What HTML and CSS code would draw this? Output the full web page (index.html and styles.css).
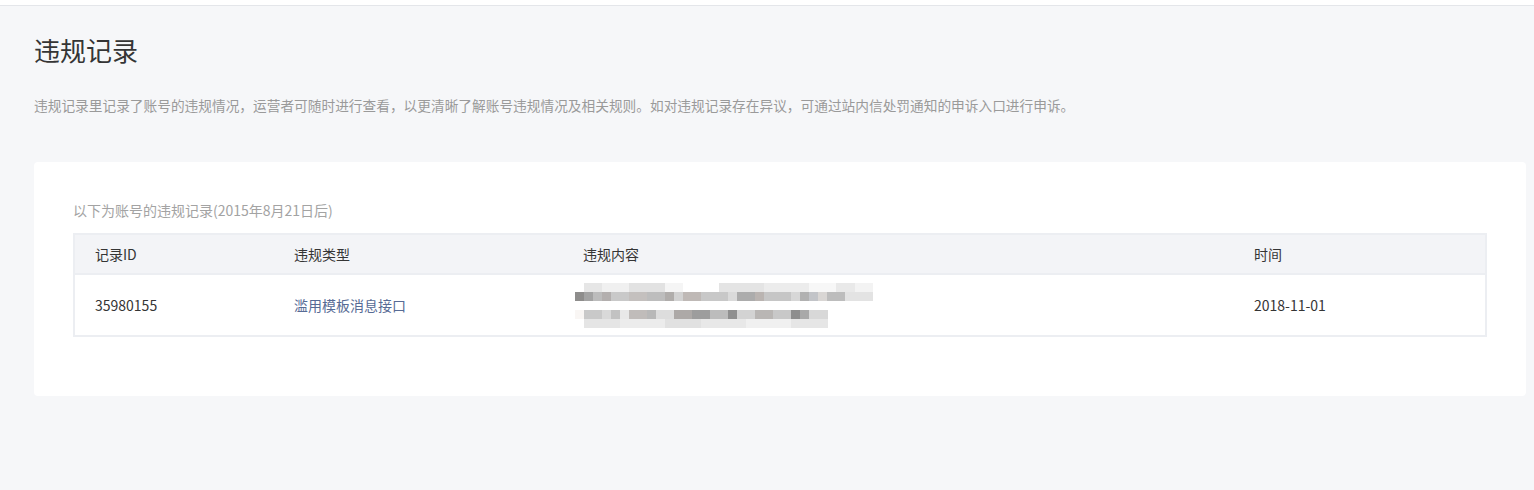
FILE: index.html
```html
<!DOCTYPE html>
<html lang="zh-CN">
<head>
    <meta charset="UTF-8">
    <meta name="viewport" content="width=device-width, initial-scale=1.0">
    <title>违规记录</title>
    <link rel="stylesheet" href="styles.css">
</head>
<body>
    <div class="topbar"></div>

    <main class="page">
        <h1 class="page-title">违规记录</h1>
        <p class="page-desc">违规记录里记录了账号的违规情况，运营者可随时进行查看，以更清晰了解账号违规情况及相关规则。如对违规记录存在异议，可通过站内信处罚通知的申诉入口进行申诉。</p>

        <section class="card">
            <p class="card-tip">以下为账号的违规记录(2015年8月21日后)</p>
            <table class="record-table">
                <thead>
                    <tr>
                        <th class="col-id">记录ID</th>
                        <th class="col-type">违规类型</th>
                        <th class="col-content">违规内容</th>
                        <th class="col-time">时间</th>
                    </tr>
                </thead>
                <tbody>
                    <tr>
                        <td>35980155</td>
                        <td><a href="#" class="type-link">滥用模板消息接口</a></td>
                        <td>
                            <!-- content is mosaic-masked in the original -->
                            <div class="masked">
                                <div class="mask-line line-1">
                                    <span class="mask-row light"></span>
                                    <span class="mask-row dark"></span>
                                </div>
                                <div class="mask-line line-2">
                                    <span class="mask-row dark"></span>
                                    <span class="mask-row light"></span>
                                </div>
                            </div>
                        </td>
                        <td>2018-11-01</td>
                    </tr>
                </tbody>
            </table>
        </section>
    </main>
</body>
</html>
```

FILE: styles.css
```css
* {
    margin: 0;
    padding: 0;
    box-sizing: border-box;
}

body {
    font-family: 'Noto Sans CJK SC', 'Noto Sans', sans-serif;
    background-color: #f6f7f9;
    color: #333;
    min-height: 490px;
}

.topbar {
    height: 6px;
    background-color: #fff;
    border-bottom: 1px solid #e4e6ea;
}

.page {
    padding: 0 8px 0 34px;
}

.page-title {
    font-size: 26px;
    font-weight: normal;
    color: #353535;
    line-height: 34px;
    padding-top: 27px;
}

.page-desc {
    font-size: 13.7px;
    color: #9a9a9a;
    line-height: 20px;
    margin-top: 28px;
}

.card {
    margin-top: 47px;
    background-color: #fff;
    border-radius: 4px;
    padding: 38px 39px 59px 39px;
}

.card-tip {
    font-size: 14px;
    color: #a3a3a3;
    line-height: 20px;
    margin-bottom: 13px;
}

.record-table {
    width: 100%;
    border-collapse: collapse;
    border: 2px solid #eceef2;
    font-size: 14px;
    color: #353535;
    text-align: left;
}

.record-table th {
    font-weight: normal;
    background-color: #f3f4f7;
    height: 40px;
    padding: 0 20px;
    border-bottom: 2px solid #eceef2;
}

.record-table td {
    height: 62px;
    padding: 0 20px;
    vertical-align: middle;
}

.col-id { width: 200px; }
.col-type { width: 289px; }
.col-content { width: 671px; }
.col-time { width: auto; }

.type-link {
    color: #576b95;
    text-decoration: none;
}

.masked {
    display: flex;
    flex-direction: column;
    gap: 9px;
    margin-left: -8px;
}

.mask-line {
    display: flex;
    flex-direction: column;
}

.mask-row {
    display: block;
    height: 9px;
}

.line-1 .mask-row { width: 298px; }
.line-2 .mask-row { width: 253px; }

.line-1 .light {
    background-image: linear-gradient(90deg,
        #fff 0 9px, #e6e6e6 9px 27px, #f0f0f0 27px 54px, #e2e2e2 54px 90px,
        #f5f5f5 90px 108px, #fff 108px 144px, #e4e4e4 144px 189px,
        #ececec 189px 234px, #f7f7f7 234px 261px, #e9e9e9 261px 280px, #f3f3f3 280px 298px);
}

.line-1 .dark {
    background-image: linear-gradient(90deg,
        #8e8d8c 0 9px, #a3a3a3 9px 18px, #bcbcbc 18px 27px, #b3afae 27px 36px,
        #c9c9c9 36px 54px, #c4c0be 54px 72px, #bdbdbd 72px 90px, #b0adab 90px 99px,
        #d2d2d2 99px 108px, #bfb9b6 108px 126px, #c8c8c8 126px 153px, #dadada 153px 162px,
        #acacac 162px 180px, #bab4b1 180px 189px, #c6c6c6 189px 216px, #d7d7d7 216px 225px,
        #b1b1b1 225px 234px, #c2c4c8 234px 243px, #d9d6d4 243px 252px, #bdbdbd 252px 270px,
        #e3e3e3 270px 298px);
}

.line-2 .dark {
    background-image: linear-gradient(90deg,
        #f9f6f4 0 9px, #c9c9c9 9px 27px, #d9d9d9 27px 36px, #c2c2c2 36px 45px,
        #e8e8e8 45px 54px, #c0bcba 54px 72px, #b8b8b8 72px 81px, #dddddd 81px 99px,
        #ada9a7 99px 117px, #9d9d9d 117px 135px, #bcbcbc 135px 153px, #8f8f8f 153px 162px,
        #d3d3d3 162px 180px, #b9b6b4 180px 198px, #c8c8c8 198px 216px, #8e8e8e 216px 225px,
        #a9a9a9 225px 234px, #d8d8d8 234px 253px);
}

.line-2 .light {
    background-image: linear-gradient(90deg,
        #fff 0 9px, #e5e5e5 9px 45px, #ececec 45px 90px, #e1e1e1 90px 126px,
        #e8e8e8 126px 171px, #f0f0f0 171px 216px, #e6e6e6 216px 253px);
}
```
